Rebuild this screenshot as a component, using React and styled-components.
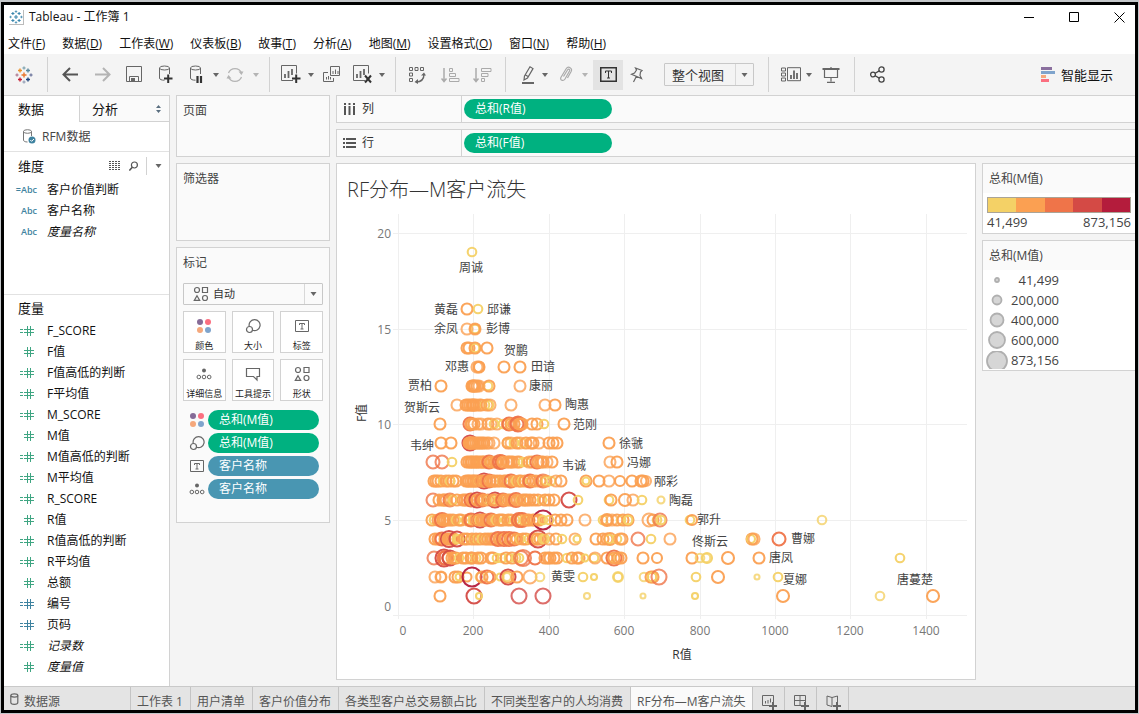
import React from 'react';
import styled, { createGlobalStyle } from 'styled-components';

const GlobalStyle = createGlobalStyle`
  * {
    box-sizing: border-box;
  }
  body {
    margin: 0;
    background: #c4c7ca;
    font-family: 'Open Sans', 'Noto Sans CJK SC', sans-serif;
    font-size: 12px;
    line-height: 18px;
    color: #111;
  }
  button, select {
    font: inherit;
    color: inherit;
    background: none;
    border: none;
    padding: 0;
    margin: 0;
  }
  svg {
    display: block;
    flex-shrink: 0;
  }
`;

const Window = styled.div`
  display: flex;
  flex-direction: column;
  min-height: calc(100vh - 3px);
  margin: 2px 1px 1px;
  border: 3px solid #000;
  background: #f4f4f4;
`;

const TitleBar = styled.header`
  display: flex;
  align-items: center;
  gap: 5px;
  height: 24px;
  padding: 0 10px 0 5px;
  background: #fff;
`;

const AppIcon = styled.span`
  border-right: 1px solid #bbb;
  border-bottom: 1px solid #bbb;
`;

const WindowButtons = styled.div`
  display: flex;
  gap: 34px;
  margin-left: auto;
`;

const MenuBar = styled.nav`
  display: flex;
  gap: 17px;
  height: 25px;
  padding: 6px 4px 0;
  background: #fff;
`;

const MenuItem = styled.button`
  height: 18px;
  white-space: nowrap;
`;

const Toolbar = styled.div`
  display: flex;
  align-items: center;
  height: 41px;
  padding-right: 22px;
`;

const ToolButton = styled.button`
  display: flex;
  align-items: center;
  justify-content: center;
  margin-left: ${props => props.$gap}px;
  ${props => props.$active && 'width: 30px; height: 30px; background: #e3e3e3;'}
`;

const Separator = styled.span`
  width: 1px;
  height: 35px;
  margin-left: ${props => props.$gap}px;
  background: #d2d2d2;
`;

const SmartButton = styled.button`
  display: flex;
  align-items: center;
  gap: 6px;
  margin-left: auto;
  font-size: 13px;
`;

const SelectBox = styled.label`
  display: flex;
  align-items: center;
  width: ${props => props.$width || '100%'};
  height: ${props => props.$height}px;
  margin-left: ${props => props.$gap || 0}px;
  border: 1px solid #c8c8c8;
  border-radius: 1px;
  font-size: ${props => props.$size}px;
  color: #333;
`;

const Select = styled.select`
  appearance: none;
  flex: 1;
  min-width: 0;
  height: 100%;
  padding-left: ${props => props.$pad}px;
  outline: none;
`;

const SelectArrow = styled.span`
  display: flex;
  align-items: center;
  justify-content: center;
  width: 18px;
  height: 100%;
  border-left: 1px solid #d8d8d8;
  pointer-events: none;
`;

const Body = styled.main`
  display: flex;
  flex: 1;
`;

const DataPane = styled.aside`
  display: flex;
  flex-direction: column;
  width: 166px;
  flex-shrink: 0;
  background: #fff;
  border-top: 1px solid #d2d2d2;
  border-right: 1px solid #d2d2d2;
`;

const PaneTabs = styled.div`
  display: flex;
  height: 26px;
`;

const PaneTab = styled.button`
  display: flex;
  align-items: center;
  justify-content: space-between;
  width: ${props => (props.$active ? '75px' : 'auto')};
  flex: ${props => (props.$active ? 'none' : 1)};
  padding: 0 8px 0 ${props => (props.$active ? 14 : 12)}px;
  font-size: 13px;
  ${props => !props.$active && `
    background: #fafafa;
    border-left: 1px solid #d2d2d2;
    border-bottom: 1px solid #d2d2d2;
  `}
`;

const Source = styled.button`
  display: flex;
  align-items: center;
  gap: 6px;
  height: 30px;
  padding-left: 18px;
  color: #444;
  border-bottom: 1px solid #e2e2e2;
`;

const PaneHeader = styled.div`
  display: flex;
  align-items: center;
  height: ${props => (props.$tools ? 27 : 25)}px;
  padding: 0 7px 0 14px;
`;

const PaneTitle = styled.h2`
  flex: 1;
  margin: 0;
  font-size: 13px;
  font-weight: 400;
`;

const HeaderTools = styled.div`
  display: flex;
  align-items: center;
  gap: 8px;
`;

const HeaderRule = styled.span`
  width: 1px;
  height: 18px;
  background: #d2d2d2;
`;

const FieldList = styled.ul`
  list-style: none;
  margin: 0;
  padding: 0 0 ${props => props.$space}px;
  ${props => props.$rule && 'border-bottom: 1px solid #e2e2e2;'}
`;

const Field = styled.li`
  display: flex;
  align-items: center;
  height: 21px;
  padding-left: 13px;
  font-style: ${props => (props.$italic ? 'italic' : 'normal')};
`;

const FieldKind = styled.span`
  display: flex;
  justify-content: flex-end;
  width: 20px;
  margin-right: 10px;
  padding-right: ${props => (props.$numeric ? 3 : 0)}px;
  font-size: 9px;
  font-weight: 600;
  font-style: normal;
  color: #3f83a0;
`;

const CardColumn = styled.section`
  display: flex;
  flex-direction: column;
  gap: 6px;
  width: 154px;
  flex-shrink: 0;
  margin-left: 6px;
`;

const Card = styled.div`
  min-height: ${props => props.$height}px;
  padding: 6px 6px 5px;
  background: #fafafa;
  border: 1px solid #d2d2d2;
`;

const CardTitle = styled.h3`
  margin: 0;
  font-size: 12px;
  font-weight: 400;
  color: #444;
`;

const MarkType = styled.div`
  padding: 11px 0 6px;
`;

const MarkGrid = styled.div`
  display: grid;
  grid-template-columns: repeat(3, 1fr);
  gap: 6px;
`;

const MarkButton = styled.button`
  display: flex;
  flex-direction: column;
  align-items: center;
  justify-content: space-between;
  height: 42px;
  padding-top: 6px;
  background: #fff;
  border: 1px solid #d2d2d2;
  font-size: 9px;
  line-height: 12px;
  color: #222;
`;

const MarkRows = styled.div`
  display: grid;
  gap: 3px;
  padding: 9px 4px 18px 6px;
`;

const MarkRow = styled.div`
  display: flex;
  align-items: center;
  gap: 3px;
`;

const Pill = styled.button`
  width: ${props => props.$width || 'auto'};
  flex: ${props => (props.$width ? 'none' : 1)};
  height: 20px;
  padding: 0 11px;
  border-radius: 10px;
  text-align: left;
  line-height: 18px;
  color: #fff;
  background: ${props => (props.$blue ? '#4996b2' : '#00b180')};
`;

const Workspace = styled.section`
  display: flex;
  flex-direction: column;
  flex: 1;
  min-width: 0;
  gap: 6px;
  margin-left: 6px;
  padding-bottom: 6px;
`;

const Shelf = styled.div`
  display: flex;
  align-items: center;
  height: 28px;
  background: #fafafa;
  border: 1px solid #d2d2d2;
  border-right: none;
`;

const ShelfLabel = styled.span`
  display: flex;
  align-items: center;
  gap: 6px;
  width: 125px;
  height: 26px;
  margin-right: 2px;
  padding-left: 6px;
  color: #333;
  border-right: 1px solid #d2d2d2;
`;

const ViewRow = styled.div`
  display: flex;
  flex: 1;
  gap: 6px;
`;

const View = styled.article`
  display: flex;
  flex-direction: column;
  flex: 1;
  min-width: 0;
  background: #fff;
  border: 1px solid #d2d2d2;
`;

const ViewTitle = styled.h1`
  margin: 0;
  padding: 12px 10px 10px;
  font-size: 20px;
  line-height: 28px;
  font-weight: 300;
  color: #333;
`;

const Chart = styled.svg`
  width: 100%;
  flex: 1;
  font-size: 12px;
`;

const Legends = styled.aside`
  display: flex;
  flex-direction: column;
  gap: 6px;
  width: 153px;
  flex-shrink: 0;
`;

const Legend = styled.div`
  background: #fff;
  border: 1px solid #d2d2d2;
  border-right: none;
  font-size: 13px;
  color: #444;
`;

const LegendTitle = styled.h3`
  margin: 0;
  padding: 6px 6px 5px;
  background: #fafafa;
  font-size: 12px;
  font-weight: 400;
`;

const Ramp = styled.div`
  display: flex;
  height: 16px;
  margin: 4px 4px 0;
  border: 1px solid #aaa497;
`;

const RampStep = styled.span`
  flex: 1;
  background: ${props => props.$color};
`;

const RampRange = styled.div`
  display: flex;
  justify-content: space-between;
  padding: 0 4px 2px;
`;

const SizeRow = styled.div`
  display: flex;
  align-items: center;
  height: 20px;
  padding-left: 2px;
`;

const SizeValue = styled.span`
  width: 50px;
  text-align: right;
`;

const SheetBar = styled.footer`
  display: flex;
  height: 24px;
  background: #e4e4e4;
  border-top: 1px solid #c9c9c9;
  overflow: hidden;
`;

const SheetTab = styled.button`
  display: flex;
  align-items: flex-start;
  gap: 5px;
  min-width: ${props => (props.$source ? 127 : 0)}px;
  padding: 6px 7px 0 6px;
  color: #555;
  white-space: nowrap;
  border-right: 1px solid #c4c4c4;
  background: ${props => (props.$active ? '#fafafa' : 'transparent')};
`;

const SheetAdd = styled(SheetTab)`
  width: 32px;
  padding: 8px 0 0 9px;
`;

// ---------- icons ----------

const Icon = ({ w, h = w, color = '#666', children, ...rest }) => (
  <svg width={w} height={h} viewBox={`0 0 ${w} ${h}`} fill="none" stroke={color} aria-hidden="true" {...rest}>
    {children}
  </svg>
);

const Caret = ({ color = '#666', w = 6 }) => (
  <svg width={w} height="4" viewBox="0 0 6 4" aria-hidden="true">
    <path d="M0 0h6L3 4z" fill={color} />
  </svg>
);

const plus = (x, y, r) => `M${x - r} ${y}h${r * 2}M${x} ${y - r}v${r * 2}`;

const Logo = ({ size, mono }) => {
  const c = colors => (mono ? '#3a87ad' : colors);
  return (
    <svg width={size} height={size} viewBox="0 0 18 18" fill="none" strokeWidth="1.4" aria-hidden="true">
      <path d={plus(9, 9, 2.5)} stroke={c('#e8762c')} />
      <path d={plus(5, 4.5, 2)} stroke={c('#eb912c')} />
      <path d={plus(13, 4.5, 2)} stroke={c('#59879b')} />
      <path d={plus(5, 13.5, 2)} stroke={c('#c72035')} />
      <path d={plus(13, 13.5, 2)} stroke={c('#1f457e')} />
      <path d={plus(9, 2, 1.6)} stroke={c('#7199a6')} strokeWidth="1" />
      <path d={plus(9, 16, 1.6)} stroke={c('#8a96b0')} strokeWidth="1" />
      <path d={plus(2, 9, 1.6)} stroke={c('#a76b84')} strokeWidth="1" />
      <path d={plus(16, 9, 1.6)} stroke={c('#5b6591')} strokeWidth="1" />
    </svg>
  );
};

const ArrowIcon = ({ flip, color }) => (
  <Icon w={17} color={color} strokeWidth="2">
    <path d="M16 8.5H2M8 2L1.5 8.5L8 15" transform={flip ? 'matrix(-1 0 0 1 17 0)' : undefined} />
  </Icon>
);

const SaveIcon = () => (
  <Icon w={17}>
    <path d="M.5 .5h15v15h-15zM3.500 15.500v-5h9v5" />
    <path d="M5 12h4v4H5z" fill="#666" stroke="none" />
  </Icon>
);

const DatabaseIcon = ({ pause }) => (
  <Icon w={15} h={19}>
    <path d="M1.500 3v10c0 1.500 2 2.200 5 2.200M11.500 3v6" />
    <ellipse cx="6.500" cy="3" rx="5" ry="2" />
    {pause
      ? <path d="M8.500 11v7M12 11v7" stroke="#333" strokeWidth="2.200" />
      : <path d="M6 13.500h8.500M10.200 9.500v8.500" stroke="#333" strokeWidth="2" />}
  </Icon>
);

const RefreshIcon = () => (
  <Icon w={18} color="#b4b4b4" strokeWidth="1.300">
    <path d="M2.500 7A7 7 0 0 1 15.500 7M15.500 11A7 7 0 0 1 2.500 11" />
    <path d="M12.500 5.500h5l-2 3.500zM.5 12.500h5l-3-3.500z" fill="#b4b4b4" stroke="none" />
  </Icon>
);

const ChartBox = ({ remove }) => (
  <Icon w={20} h={19}>
    <path d="M12 15.500H.5V.5h15v8" />
    <path d="M4 9v4M7.500 6v7M11 4v6" strokeWidth="1.800" />
    {remove
      ? <path d="M12 10.500l6 7M18 10.500l-6 7" stroke="#333" strokeWidth="2" />
      : <path d="M11 13.500h8.500M15.200 9.500v8.500" stroke="#333" strokeWidth="2" />}
  </Icon>
);

const DuplicateIcon = () => (
  <Icon w={18} h={17}>
    <path d="M7.500 .5h9v9h-9zM5 6.500H.5v9h10V12" />
    <path d="M10 5v3M12.500 3.500V8M15 5v3M3.500 11v2.500M5.500 10v3.500M7.500 11v2.500" />
  </Icon>
);

const SwapIcon = () => (
  <Icon w={18} h={18}>
    <path d="M1.500 1.500h3v3h-3zM7 1.500h3v3H7zM12.500 1.500h3v3h-3zM1.500 7h3v3h-3zM1.500 12.500h3v3h-3z" />
    <path d="M16 8c0 5-3 8-8 8" strokeWidth="1.400" />
    <path d="M13 9.500L16 6.500l2 3zM10 13l-3.500 3 3.500 2z" fill="#666" stroke="none" />
  </Icon>
);

const SortIcon = ({ desc }) => (
  <Icon w={19} h={16} color="#aaa">
    <path d="M3 1v13M.5 11.500l2.500 3 2.500-3" strokeWidth="1.500" />
    {desc
      ? <path d="M8.500 1.500h9.500v3H8.500zM8.500 6.500h6.500v3H8.500zM8.500 11.500h3v3h-3z" />
      : <path d="M8.500 1.500h3v3h-3zM8.500 6.500h6v3h-6zM8.500 11.500h9.500v3H8.500z" />}
  </Icon>
);

const PenIcon = () => (
  <Icon w={14} h={18}>
    <path d="M3.500 10L9 .8l3 1.800L6.500 12l-3.500 2zM4.500 9l3 1.800" strokeWidth="1.200" />
    <path d="M1 17h12" strokeWidth="2" />
  </Icon>
);

const ClipIcon = () => (
  <Icon w={14} h={17} color="#aaa" strokeWidth="1.200">
    <path d="M4.500 10.500l4-6.500c1-1.500 2.800-.5 2 1L6 13c-1.800 2.800-5.500 1-4-1.800L7 3c2.300-3.500 7-1 5 2.800L8.500 12" />
  </Icon>
);

const TextIcon = ({ w, h, color, s = 1 }) => (
  <Icon w={w} h={h} color={color} strokeWidth={s}>
    <path d={`M${s / 2} ${s / 2}h${w - s}v${h - s}h${s - w}z`} />
    <path
      d={`M${w / 2 - 3} ${h / 2 - 1.500}v-2h6v2M${w / 2} ${h / 2 - 3.500}v7M${w / 2 - 1.500} ${h / 2 + 3.500}h3`}
      strokeWidth="1"
    />
  </Icon>
);

const PinIcon = () => (
  <Icon w={14} h={16} strokeWidth="1.200">
    <path d="M5.500 1l6.500 2.500-1.500 1.500-.5 3.500 1.500 3L1.500 7.300l3-1.300 2-3zM6.300 9.500L3.500 15" />
  </Icon>
);

const CardsIcon = () => (
  <Icon w={21} h={15}>
    <path d="M.5 1h4v3h-4zM.5 6h4v3h-4zM.5 11h4v3h-4zM6.500 .7h13v13h-13z" />
    <path d="M10 8v4M13 3.500V12M16 6v6" strokeWidth="1.800" />
  </Icon>
);

const PresentIcon = () => (
  <Icon w={18} h={16}>
    <path d="M.5 2h17" strokeWidth="2" />
    <path d="M2.500 3v7.500h13V3M9 0v1M9 10.500v4M5 15.300h8" strokeWidth="1.200" />
  </Icon>
);

const ShareIcon = () => (
  <Icon w={15} h={17} color="#444" strokeWidth="1.300">
    <circle cx="3" cy="8.500" r="2.400" />
    <circle cx="11.500" cy="3.500" r="2.600" />
    <circle cx="11.500" cy="13.500" r="2.600" />
    <path d="M5.200 7.300l4-2.400M5.200 9.700l4 2.400" />
  </Icon>
);

const SmartIcon = () => (
  <svg width="14" height="15" viewBox="0 0 14 15" aria-hidden="true">
    <path d="M0 0h11v3H0z" fill="#8a6f9e" />
    <path d="M0 4h14v3H0z" fill="#7fa4cc" />
    <path d="M0 8h5v3H0z" fill="#f5a87c" />
    <path d="M0 12h8v3H0z" fill="#fb6f80" />
  </svg>
);

const SourceIcon = () => (
  <Icon w={14} h={15} color="#777">
    <path d="M1.500 2.500v8.500c0 1.200 1.500 2 4 2M9.500 2.500V7" />
    <ellipse cx="5.500" cy="2.500" rx="4" ry="1.800" />
    <circle cx="10" cy="11" r="3.500" fill="#3f83a0" stroke="none" />
    <path d="M8.300 11l1.300 1.300L12 10" stroke="#fff" />
  </Icon>
);

const HashIcon = ({ calc, color }) => (
  <Icon w={14} h={10} color={color} shapeRendering="crispEdges">
    <path d="M4 3.500h10M4 6.500h10M7.500 0v10M10.500 0v10" />
    {calc && <path d="M0 3.500h3M0 6.500h3" />}
  </Icon>
);

const ColorIcon = () => (
  <svg width="16" height="16" viewBox="0 0 16 16" aria-hidden="true">
    <circle cx="4" cy="4" r="3" fill="#866b97" />
    <circle cx="12" cy="4" r="3" fill="#fb6f80" />
    <circle cx="4" cy="12" r="3" fill="#f5a87c" />
    <circle cx="12" cy="12" r="3" fill="#7fa4cc" />
  </svg>
);

const SizeIcon = () => (
  <Icon w={16} strokeWidth="1.200">
    <path d="M4.200 8.200A5.500 5.500 0 1 1 7.500 12.200" />
    <circle cx="4.500" cy="11.500" r="3" />
  </Icon>
);

const DetailIcon = () => (
  <Icon w={16}>
    <circle cx="8" cy="4.500" r="2" fill="#666" stroke="none" />
    <circle cx="2.800" cy="11" r="1.800" />
    <circle cx="8" cy="11" r="1.800" />
    <circle cx="13.200" cy="11" r="1.800" />
  </Icon>
);

const TipIcon = () => (
  <Icon w={16} strokeWidth="1.200">
    <path d="M1.500 2.500h13v8h-2.500V14L8.500 10.500h-7z" />
  </Icon>
);

const ShapeIcon = () => (
  <Icon w={16} strokeWidth="1.200">
    <circle cx="4" cy="4" r="2.500" />
    <path d="M10 1.500h5v5h-5zM4 9.800L6.700 14.400H1.300z" />
    <circle cx="12.500" cy="12" r="2.500" />
  </Icon>
);

const LabelIcon = () => (
  <Icon w={16}>
    <path d="M1.500 2.500h13v11h-13zM5.500 7V5.500h5V7M8 5.500v5.500M6.500 11h3" />
  </Icon>
);

const AddSheetIcon = ({ kind }) => (
  <Icon w={16}>
    {kind === 'sheet' && <path d="M8 10.500H.5V.5h11V7M3.500 6v2.500M6 5v3.500M8.500 3.500v4" />}
    {kind === 'dashboard' && <path d="M8 10.500H.5V.5h11V7M.5 5.500h11M6 .5v10" />}
    {kind === 'story' && <path d="M6 2.500v9L1 10V1zM6 2.500L11.500 1v6" />}
    <path d="M7 11h8M11 7v8" strokeWidth="2" />
  </Icon>
);

// ---------- data ----------

const menus = [
  ['文件', 'F'], ['数据', 'D'], ['工作表', 'W'], ['仪表板', 'B'], ['故事', 'T'],
  ['分析', 'A'], ['地图', 'M'], ['设置格式', 'O'], ['窗口', 'N'], ['帮助', 'H'],
];

const dimensions = [
  { name: '客户价值判断', kind: '=Abc' },
  { name: '客户名称', kind: 'Abc' },
  { name: '度量名称', kind: 'Abc', italic: true },
];

const measures = [
  { name: 'F_SCORE', calc: true },
  { name: 'F值' },
  { name: 'F值高低的判断', calc: true },
  { name: 'F平均值', calc: true },
  { name: 'M_SCORE', calc: true },
  { name: 'M值' },
  { name: 'M值高低的判断', calc: true },
  { name: 'M平均值', calc: true },
  { name: 'R_SCORE', calc: true },
  { name: 'R值' },
  { name: 'R值高低的判断', calc: true },
  { name: 'R平均值', calc: true },
  { name: '总额' },
  { name: '编号', calc: true, blue: true },
  { name: '页码', calc: true, blue: true },
  { name: '记录数', calc: true, italic: true },
  { name: '度量值', italic: true },
];

const markButtons = [
  ['颜色', ColorIcon], ['大小', SizeIcon], ['标签', LabelIcon],
  ['详细信息', DetailIcon], ['工具提示', TipIcon], ['形状', ShapeIcon],
];

const markRows = [
  ['总和(M值)', ColorIcon, false],
  ['总和(M值)', SizeIcon, false],
  ['客户名称', LabelIcon, true],
  ['客户名称', DetailIcon, true],
];

const sheets = ['工作表 1', '用户清单', '客户价值分布', '各类型客户总交易额占比', '不同类型客户的人均消费', 'RF分布—M客户流失'];

const sizes = [['41,499', 2], ['200,000', 4.5], ['400,000', 6.5], ['600,000', 8], ['873,156', 10]];

const ramp = ['#f4d166', '#fba052', '#ef7449', '#d44a45', '#b41c3c'];
const tones = { y: 0, o: 1, d: 2, r: 3, c: 4 };
const radii = { y: 4.3, o: 5.5, d: 6.5, r: 7.5, c: 9.5 };

// One string per F value: tone letter (lower case is a fainter mark), x, optional radius.
const marks = {
  19: 'Y472',
  16: 'O467 Y478',
  15: 'o467 o475 Y475 O475:5',
  14: 'O467 O469 Y475 O475 O487',
  13: 'o477 O479:5 O479 O504 O520',
  12: 'O441 O472 O473 O474 O475 O477 o479 Y488 O489 o520',
  11: 'o457 O466 O468 O470 O472 O473 O474 O476 o479 O481 Y485 O487 Y489 o490 o511 o545 O555',
  10: 'O440 D470 O471 O472 O474 o478 o481 O488 o491 Y494 o497 Y503 O508 D509 O511 O514 D517 D518:7.500 O520 O522 O532 O537 Y544 O564',
  9: 'O441 O451 R470 O469 O470 O471 O472 O473 O474 O476 O478 O480 O482 O484 o487 o489 o494 Y507 O508 o511 Y514 O517 o520 Y523 O526 O531 O533 o539 O549 O553 O557 O609',
  8: 'd433 d442 Y452 O467 O469 O471 O472 O474 O476 O477 O479 O481 Y482 O483 O484 O487 D489 O491 Y494 O495 O497 D500:7 D502 O503 O507 O509 O511 O513 o517 O519 Y523 Y526 o529 O532 D537 O538 O541 O543 o547 O552 o610 O617',
  7: 'O434 O436 O438 O441 Y443 O446 O449 Y450 O453 O456 O466 O468 O469 O471 O473 O474 O476 Y477 O478 R484:7.500 O481 O483 O486 D489 O490 O493 O494 O497 O500 Y502 O504 O506 O508 D511 O514 Y516 O519 O521 Y522 O525 O528 D530 O533 o536 O540 d543 Y546 O546 Y551 o556 O561 O586 Y586:3.500 O599 o609 O620:5 O632 O641 O643 o646:5',
  6: 'd433 O439 O443 O444 O446 d450 O451 Y453 O457 O463 O465 O467 O470 D471 O472 O474 R477:7.500 O477 O480 D482 O484 Y487 O488 Y491 R495:7.500 O493 O495 Y499 O501 D503 O504 O506 O509 O511 O513 D516:7 O517 Y521 O523 O525 O527 O530 O534 O538 Y542 O545 O549 O554 R569 Y578 Y609 O611 O625:6 o633 Y642 y661:3.500',
  5: 'O432 Y434 O438 O440 D442:7 O443 O445 O447 O450 O453 Y456 O459 O461 Y466 O468 O470 D471 Y473 O476 R480:7.500 O478 Y480 O482 O484 O486 O488 D491 O494 Y496 O499 O501 O503 Y506 O508 O511 Y515 O517 D519:7 O520 D522:7 Y524 O527 O529 O533 O535 O537 C543 O539 Y543 Y549 O555 O561 O567 o585 Y603 O607:6 O607:5 o612 O617 Y621 O623 O628 Y628 o649:6.500 O653 Y657 d660:6.500 Y661 Y690 O692:5 y822',
  4: 'O435 O438 O440 D442 O445 R449:8 O448 O450 O452 O454 Y457 R457 Y459 O464 O467 Y470 O472 Y474 O476 Y478 O480 Y482 O485 O488 O491 O493 O495 D498:7 O500 Y501 D504:7 O505 D509:7 O510 O512 D514 O517 Y520 O523 O526 Y529 O533 O535 R538:8.500 O537 O540 Y543 Y545 o549 O556 Y562 o575 Y577:3.500 O596 O603 O607 Y609 O610:6 Y617 O622 o620 d638 Y651 o670 O752 Y751:4 o754 D779',
  3: 'd434 R444:8.500 D446:7 D444 O448 R450 O452 O454 O456 Y459 O463 O466 Y470 O472 Y476 O471 O478 O481 O491 O493 Y497 Y502 O506 Y509 O512 Y516 d521:7 Y519 d523:8 D535 O545 O548 O550 O554 O557 Y567 O572 O577 O579 Y585:3.500 Y594 o595 O607 Y611 D614:7.500 O614 O618 O621 O643 O657:5 O692 y700 y706 Y707:5 O728:6 O759 Y900',
  2: 'o435 o441 O441:5 O455 O458 Y459:3.500 O467:4.500 C472 y480 O482 D487 O490 Y500:3.500 R508 O508 y507:4 O517 o530:6.500 y540 Y583 Y594:3 Y618 y618:5 y644 O651 O653 Y652 d659:7.500 Y696 O718:6 y757:2.500 Y778',
  1: 'O440 R474 Y479:3 r519 r543 y587:3 y643:2.500 Y695:3 O783:6 y880 O933:6',
};

const labels = [
  ['周诚', 459, 267], ['黄磊', 434, 309], ['邱谦', 487, 309], ['余凤', 434, 328], ['彭博', 486, 328],
  ['贺鹏', 504, 350], ['邓惠', 445, 366], ['田谙', 531, 366], ['贾柏', 408, 385], ['康丽', 529, 385],
  ['贺斯云', 404, 407], ['陶惠', 565, 404], ['范刚', 573, 424], ['韦绅', 410, 445], ['徐虢', 619, 443],
  ['韦诚', 562, 465], ['冯娜', 627, 462], ['邴彩', 654, 481], ['陶磊', 669, 500], ['郭升', 697, 519],
  ['佟斯云', 692, 541], ['曹娜', 791, 538], ['唐凤', 769, 557], ['黄雯', 551, 576], ['夏娜', 783, 579],
  ['唐蔓楚', 897, 579],
];

const xTicks = [[0, 398], [200, 473], [400, 549], [600, 624], [800, 700], [1000, 775], [1200, 850], [1400, 926]];
const yTicks = [[20, 233], [15, 329], [10, 424], [5, 520], [0, 615]];

const parseMarks = text =>
  text.split(' ').map(token => {
    const [head, r] = token.split(':');
    const letter = head[0].toLowerCase();
    return {
      x: Number(head.slice(1)),
      r: r ? Number(r) : radii[letter],
      color: ramp[tones[letter]],
      opacity: head[0] === letter ? 0.8 : 0.95,
    };
  });

const ScatterChart = () => (
  <Chart viewBox="337 214 638 465" role="img" aria-label="RF分布">
    <g stroke="#efefef" shapeRendering="crispEdges">
      {xTicks.map(([v, x]) => <path key={v} d={`M${x + 0.5} 214V619`} />)}
      {yTicks.map(([v, y]) => <path key={v} d={`M393 ${y + 0.5}H967`} />)}
    </g>
    <g fill="none" strokeWidth="2.100">
      {Object.keys(marks).reverse().map(f =>
        parseMarks(marks[f]).map((m, i) => (
          <circle key={`${f}-${i}`} cx={m.x} cy={Math.round(615 - 19.1 * f)} r={m.r} stroke={m.color} opacity={m.opacity} />
        ))
      )}
    </g>
    <g fill="#444">
      {labels.map(([name, x, y]) => <text key={name} x={x} y={y + 5}>{name}</text>)}
    </g>
    <g fill="#777">
      {xTicks.map(([v, x]) => <text key={v} x={v === 0 ? 403 : x} y="635" textAnchor="middle">{v}</text>)}
      {yTicks.map(([v, y]) => <text key={v} x="391" y={v === 0 ? 611 : y + 5} textAnchor="end">{v}</text>)}
    </g>
    <g fill="#333" textAnchor="middle">
      <text x="682" y="659">R值</text>
      <text transform="translate(366 413) rotate(-90)">F值</text>
    </g>
  </Chart>
);

const MainToolbar = () => (
  <Toolbar>
    <ToolButton $gap={11} aria-label="开始"><Logo size={18} /></ToolButton>
    <Separator $gap={14} />
    <ToolButton $gap={14} aria-label="撤销"><ArrowIcon color="#555" /></ToolButton>
    <ToolButton $gap={15} aria-label="重做"><ArrowIcon flip color="#b4b4b4" /></ToolButton>
    <ToolButton $gap={15} aria-label="保存"><SaveIcon /></ToolButton>
    <ToolButton $gap={15} aria-label="新建数据源"><DatabaseIcon /></ToolButton>
    <ToolButton $gap={16} aria-label="暂停更新"><DatabaseIcon pause /></ToolButton>
    <ToolButton $gap={9} aria-label="更新选项"><Caret /></ToolButton>
    <ToolButton $gap={7} aria-label="刷新"><RefreshIcon /></ToolButton>
    <ToolButton $gap={9} aria-label="刷新选项"><Caret color="#b4b4b4" /></ToolButton>
    <Separator $gap={10} />
    <ToolButton $gap={11} aria-label="新建工作表"><ChartBox /></ToolButton>
    <ToolButton $gap={7} aria-label="新建选项"><Caret /></ToolButton>
    <ToolButton $gap={9} aria-label="复制"><DuplicateIcon /></ToolButton>
    <ToolButton $gap={12} aria-label="清除"><ChartBox remove /></ToolButton>
    <ToolButton $gap={6} aria-label="清除选项"><Caret /></ToolButton>
    <Separator $gap={10} />
    <ToolButton $gap={12} aria-label="交换行和列"><SwapIcon /></ToolButton>
    <ToolButton $gap={15} aria-label="升序"><SortIcon /></ToolButton>
    <ToolButton $gap={13} aria-label="降序"><SortIcon desc /></ToolButton>
    <Separator $gap={13} />
    <ToolButton $gap={15} aria-label="突出显示"><PenIcon /></ToolButton>
    <ToolButton $gap={7} aria-label="突出显示选项"><Caret /></ToolButton>
    <ToolButton $gap={11} aria-label="分组"><ClipIcon /></ToolButton>
    <ToolButton $gap={9} aria-label="分组选项"><Caret color="#b4b4b4" /></ToolButton>
    <ToolButton $gap={5} $active aria-label="显示标记标签"><TextIcon w={17} h={15} s={1.5} color="#333" /></ToolButton>
    <ToolButton $gap={7} aria-label="固定轴"><PinIcon /></ToolButton>
    <SelectBox $gap={20} $width="90px" $height={23} $size={13}>
      <Select $pad={7} aria-label="适合">
        <option>整个视图</option>
      </Select>
      <SelectArrow><Caret w={7} /></SelectArrow>
    </SelectBox>
    <Separator $gap={14} />
    <ToolButton $gap={12} aria-label="显示卡"><CardsIcon /></ToolButton>
    <ToolButton $gap={4} aria-label="显示卡选项"><Caret /></ToolButton>
    <ToolButton $gap={10} aria-label="演示模式"><PresentIcon /></ToolButton>
    <Separator $gap={14} />
    <ToolButton $gap={15} aria-label="共享"><ShareIcon /></ToolButton>
    <SmartButton><SmartIcon />智能显示</SmartButton>
  </Toolbar>
);

const DataPanel = () => (
  <DataPane>
    <PaneTabs>
      <PaneTab $active>数据</PaneTab>
      <PaneTab>
        分析
        <Icon w={5} h={8} stroke="none">
          <path d="M0 3L2.500 0L5 3zM0 5h5L2.500 8z" fill="#5b6f80" />
        </Icon>
      </PaneTab>
    </PaneTabs>
    <Source><SourceIcon />RFM数据</Source>
    <PaneHeader $tools>
      <PaneTitle>维度</PaneTitle>
      <HeaderTools>
        <Icon w={12} h={9} color="#555" strokeDasharray="2 1" shapeRendering="crispEdges">
          <path d="M0 .5h12M0 2.500h12M0 4.500h12M0 6.500h12M0 8.500h12" />
        </Icon>
        <Icon w={9} h={10} color="#555" strokeWidth="1.200">
          <circle cx="5.400" cy="4" r="3" />
          <path d="M3.300 6.200L.3 9.500" strokeWidth="1.600" />
        </Icon>
        <HeaderRule />
        <Caret w={7} />
      </HeaderTools>
    </PaneHeader>
    <FieldList $space={52} $rule>
      {dimensions.map(f => (
        <Field key={f.name} $italic={f.italic}><FieldKind>{f.kind}</FieldKind>{f.name}</Field>
      ))}
    </FieldList>
    <PaneHeader><PaneTitle>度量</PaneTitle></PaneHeader>
    <FieldList $space={9}>
      {measures.map(f => (
        <Field key={f.name} $italic={f.italic}>
          <FieldKind $numeric><HashIcon calc={f.calc} color={f.blue ? '#3f83a0' : '#3fa582'} /></FieldKind>
          {f.name}
        </Field>
      ))}
    </FieldList>
  </DataPane>
);

const Cards = () => (
  <CardColumn>
    <Card $height={62}><CardTitle>页面</CardTitle></Card>
    <Card $height={78}><CardTitle>筛选器</CardTitle></Card>
    <Card>
      <CardTitle>标记</CardTitle>
      <MarkType>
        <SelectBox $height={22} $size={11}>
          <Icon w={26} h={16} strokeWidth="1.200">
            <circle cx="13" cy="4" r="2.500" />
            <path d="M18.500 1.500h5v5h-5zM13 9.800L15.700 14.400H10.300z" />
            <circle cx="21" cy="12" r="2.500" />
          </Icon>
          <Select $pad={3} aria-label="标记类型">
            <option>自动</option>
          </Select>
          <SelectArrow><Caret w={7} /></SelectArrow>
        </SelectBox>
      </MarkType>
      <MarkGrid>
        {markButtons.map(([name, Mark]) => (
          <MarkButton key={name}><Mark />{name}</MarkButton>
        ))}
      </MarkGrid>
      <MarkRows>
        {markRows.map(([name, Mark, blue], i) => (
          <MarkRow key={i}><Mark /><Pill $blue={blue}>{name}</Pill></MarkRow>
        ))}
      </MarkRows>
    </Card>
  </CardColumn>
);

const App = () => (
  <>
    <GlobalStyle />
    <Window>
      <TitleBar>
        <AppIcon><Logo size={14} mono /></AppIcon>
        <span>Tableau - 工作簿 1</span>
        <WindowButtons>
          <button aria-label="最小化"><Icon w={11} color="#000"><path d="M0 5.500h10" /></Icon></button>
          <button aria-label="最大化"><Icon w={11} color="#000"><path d="M.5 .5h9v9h-9z" /></Icon></button>
          <button aria-label="关闭"><Icon w={11} color="#000"><path d="M.5 .5l10 10M10.500 .5l-10 10" /></Icon></button>
        </WindowButtons>
      </TitleBar>
      <MenuBar>
        {menus.map(([name, key]) => <MenuItem key={key}>{name}(<u>{key}</u>)</MenuItem>)}
      </MenuBar>
      <MainToolbar />
      <Body>
        <DataPanel />
        <Cards />
        <Workspace>
          <Shelf>
            <ShelfLabel>
              <Icon w={13} h={12} color="#555" strokeWidth="2" strokeDasharray="2 1 9">
                <path d="M2 0v12M6.500 0v12M11 0v12" />
              </Icon>
              列
            </ShelfLabel>
            <Pill $width="148px">总和(R值)</Pill>
          </Shelf>
          <Shelf>
            <ShelfLabel>
              <Icon w={13} h={12} color="#555" strokeWidth="2" strokeDasharray="2 1 10">
                <path d="M0 2h13M0 6h13M0 10h13" />
              </Icon>
              行
            </ShelfLabel>
            <Pill $width="148px">总和(F值)</Pill>
          </Shelf>
          <ViewRow>
            <View>
              <ViewTitle>RF分布—M客户流失</ViewTitle>
              <ScatterChart />
            </View>
            <Legends>
              <Legend>
                <LegendTitle>总和(M值)</LegendTitle>
                <Ramp>{ramp.map(color => <RampStep key={color} $color={color} />)}</Ramp>
                <RampRange><span>41,499</span><span>873,156</span></RampRange>
              </Legend>
              <Legend>
                <LegendTitle>总和(M值)</LegendTitle>
                {sizes.map(([value, r]) => (
                  <SizeRow key={value}>
                    <svg width="24" height="18" viewBox="0 0 24 18" aria-hidden="true">
                      <circle cx="12" cy={r === 10 ? 10 : 9} r={r} fill="#d6d6d6" stroke="#b0b0b0" strokeWidth="1.800" />
                    </svg>
                    <SizeValue>{value}</SizeValue>
                  </SizeRow>
                ))}
              </Legend>
            </Legends>
          </ViewRow>
        </Workspace>
      </Body>
      <SheetBar>
        <SheetTab $source>
          <Icon w={9} h={12} strokeWidth="1.200">
            <path d="M.8 2.500v7c0 2.500 7 2.500 7 0v-7" />
            <ellipse cx="4.300" cy="2.500" rx="3.500" ry="1.600" />
          </Icon>
          数据源
        </SheetTab>
        {sheets.map((name, i) => <SheetTab key={name} $active={i === sheets.length - 1}>{name}</SheetTab>)}
        <SheetAdd aria-label="新建工作表"><AddSheetIcon kind="sheet" /></SheetAdd>
        <SheetAdd aria-label="新建仪表板"><AddSheetIcon kind="dashboard" /></SheetAdd>
        <SheetAdd aria-label="新建故事"><AddSheetIcon kind="story" /></SheetAdd>
      </SheetBar>
    </Window>
  </>
);

export default App;
